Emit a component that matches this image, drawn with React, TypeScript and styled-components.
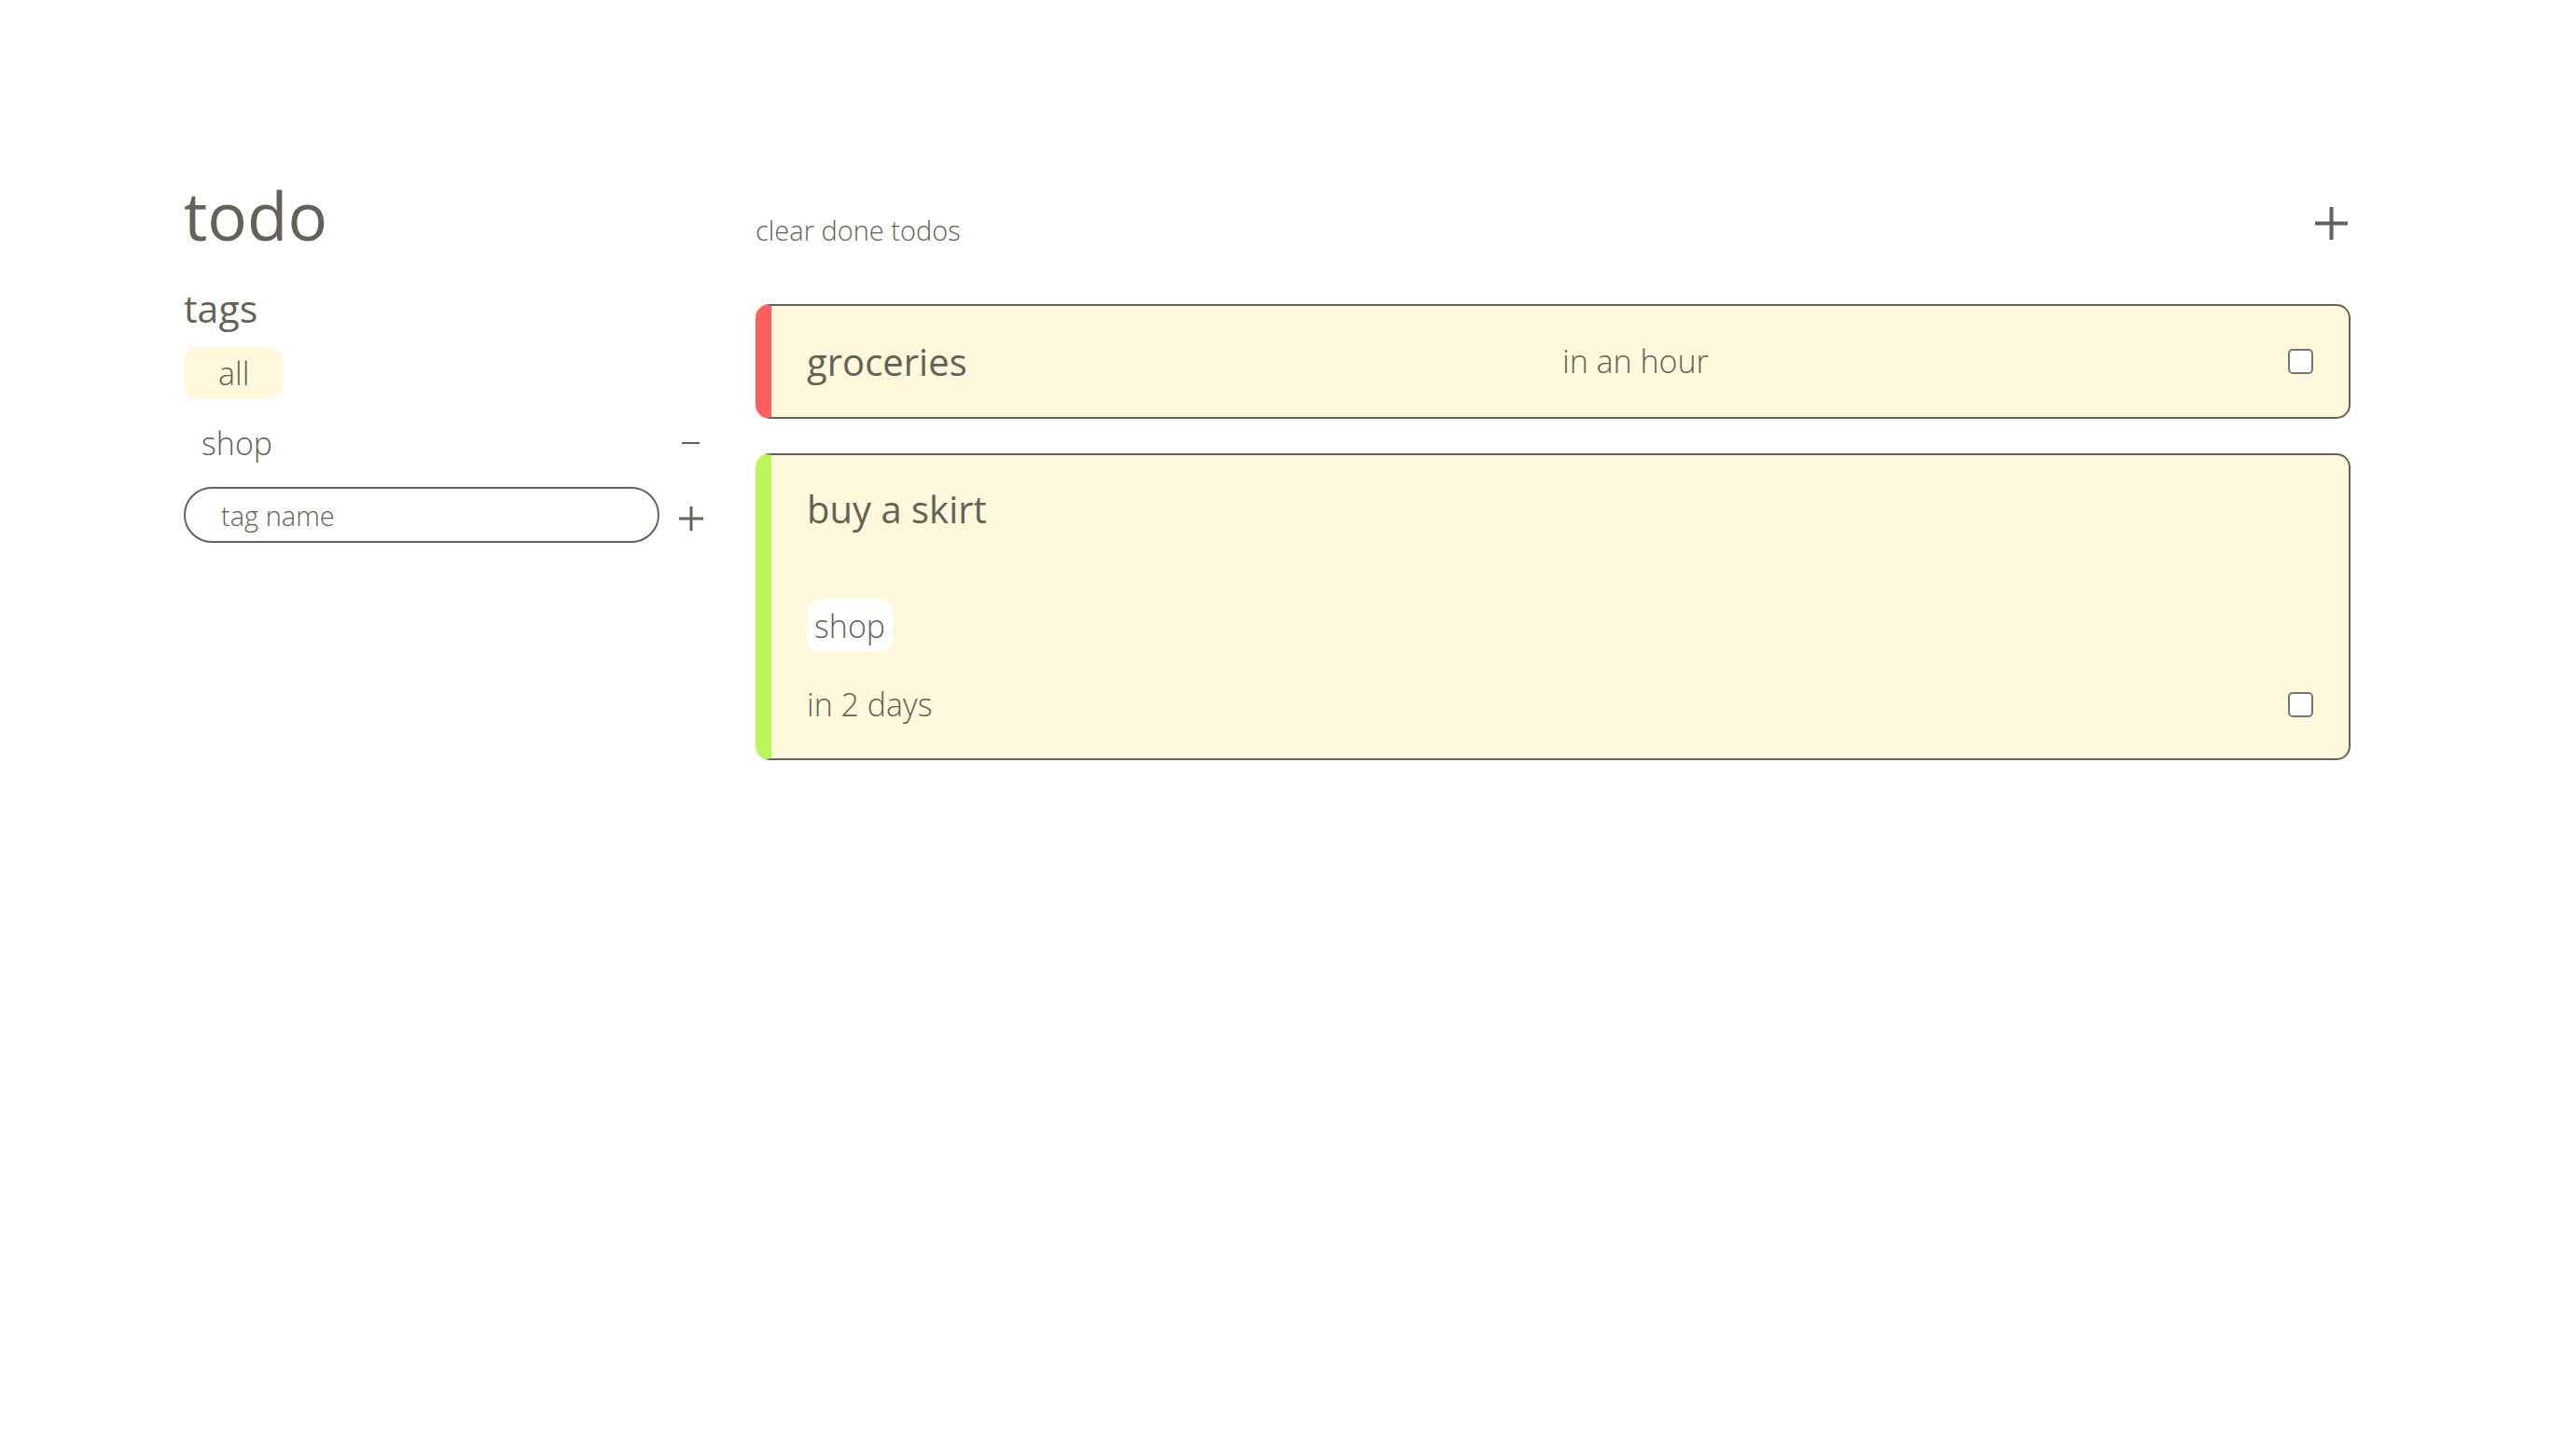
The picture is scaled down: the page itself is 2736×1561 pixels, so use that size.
import styled, { createGlobalStyle } from "styled-components";

const GlobalStyle = createGlobalStyle`
  body {
    margin: 0;
    background: #ffffff;
    color: #646256;
    font-family: "Open Sans", "Noto Sans", sans-serif;
  }
`;

const INK = "#646256";
const CREAM = "#fff8dc";

type Todo = {
  id: number;
  title: string;
  due: string;
  color: string;
  tags: string[];
};

const todos: Todo[] = [
  { id: 1, title: "groceries", due: "in an hour", color: "#ff5f5f", tags: [] },
  { id: 2, title: "buy a skirt", due: "in 2 days", color: "#bbf65c", tags: ["shop"] },
];

const Page = styled.div`
  display: grid;
  grid-template-columns: 558px 1fr;
  column-gap: 55px;
  padding: 195px 216px 0 197px;
`;

const Sidebar = styled.aside`
  display: flex;
  flex-direction: column;
`;

const Title = styled.h1`
  margin: 0;
  font-size: 71px;
  font-weight: 400;
  line-height: 71px;
`;

const TagsHeading = styled.h2`
  margin: 40px 0 0;
  font-size: 41px;
  font-weight: 500;
  line-height: 48px;
`;

const TagList = styled.div`
  display: flex;
  flex-direction: column;
  gap: 21px;
  margin-top: 18px;
`;

const TagPill = styled.button<{ $active?: boolean }>`
  align-self: flex-start;
  height: 56px;
  padding: 0 37px;
  border: none;
  border-radius: 15px;
  background: ${(p) => (p.$active ? CREAM : "transparent")};
  color: ${INK};
  font-family: inherit;
  font-size: 34px;
  font-weight: 300;
`;

const TagRow = styled.div`
  display: flex;
  align-items: center;
  justify-content: space-between;
  height: 52px;
  padding: 0 5px 0 19px;
  font-size: 34px;
  font-weight: 300;
`;

const IconButton = styled.button`
  display: flex;
  align-items: center;
  justify-content: center;
  padding: 0;
  border: none;
  background: none;
  color: ${INK};
`;

const NewTagRow = styled.div`
  display: flex;
  align-items: center;
  gap: 21px;
`;

const AddTag = styled(IconButton)`
  margin-top: 7px;
`;

const TagInput = styled.input`
  box-sizing: border-box;
  width: 510px;
  height: 60px;
  padding: 0 0 0 38px;
  border: 2px solid ${INK};
  border-radius: 30px;
  background: #fff;
  font-family: inherit;
  font-size: 29px;
  font-weight: 300;
  color: ${INK};
  outline: none;

  &::placeholder {
    color: ${INK};
    opacity: 1;
  }
`;

const Main = styled.main`
  display: flex;
  flex-direction: column;
  padding-top: 4px;
`;

const Toolbar = styled.div`
  display: flex;
  align-items: flex-end;
  justify-content: space-between;
  height: 66px;
  margin-bottom: 61px;
`;

const ClearButton = styled.button`
  padding: 0;
  border: none;
  background: none;
  color: ${INK};
  font-family: inherit;
  font-size: 29px;
  font-weight: 300;
  line-height: 37px;
`;

const AddTodo = styled(IconButton)`
  margin: 0 3px 8px 0;
`;

const TodoList = styled.div`
  display: flex;
  flex-direction: column;
  gap: 37px;
`;

const Card = styled.div<{ $color: string }>`
  box-sizing: border-box;
  padding: 36px 38px;
  border: 2px solid ${INK};
  border-left: 17px solid ${(p) => p.$color};
  border-radius: 15px;
  background: ${CREAM};
`;

const TaggedCard = styled(Card)`
  padding: 34px 38px 37px;
`;

const CardRow = styled.div`
  display: grid;
  grid-template-columns: 810px 1fr auto;
  align-items: center;
`;

const TodoTitle = styled.div`
  font-size: 40px;
  font-weight: 400;
  line-height: 47px;
`;

const Due = styled.div`
  font-size: 34px;
  font-weight: 300;
  line-height: 41px;
`;

const DueRow = styled.div`
  display: flex;
  align-items: center;
  justify-content: space-between;
  margin-top: 36px;
`;

const Chips = styled.div`
  display: flex;
  gap: 12px;
  margin-top: 73px;
`;

const Chip = styled.span`
  display: flex;
  align-items: center;
  height: 57px;
  padding: 0 8px;
  border-radius: 15px;
  background: #ffffff;
  font-size: 34px;
  font-weight: 300;
`;

const Check = styled.input.attrs({ type: "checkbox" })`
  appearance: none;
  box-sizing: border-box;
  width: 27px;
  height: 27px;
  margin: 0;
  border: 2px solid #767676;
  border-radius: 5px;
  background: #ffffff;
`;

function Plus({ size, stroke }: { size: number; stroke: number }) {
  return (
    <svg width={size} height={size} viewBox={`0 0 ${size} ${size}`}>
      <line x1={size / 2} y1={0} x2={size / 2} y2={size} stroke={INK} strokeWidth={stroke} />
      <line x1={0} y1={size / 2} x2={size} y2={size / 2} stroke={INK} strokeWidth={stroke} />
    </svg>
  );
}

function Minus() {
  return (
    <svg width={19} height={4} viewBox="0 0 19 4">
      <line x1={0} y1={2} x2={19} y2={2} stroke={INK} strokeWidth={2} />
    </svg>
  );
}

function TodoCard({ todo }: { todo: Todo }) {
  if (todo.tags.length === 0) {
    return (
      <Card $color={todo.color}>
        <CardRow>
          <TodoTitle>{todo.title}</TodoTitle>
          <Due>{todo.due}</Due>
          <Check />
        </CardRow>
      </Card>
    );
  }

  return (
    <TaggedCard $color={todo.color}>
      <TodoTitle>{todo.title}</TodoTitle>
      <Chips>
        {todo.tags.map((tag) => (
          <Chip key={tag}>{tag}</Chip>
        ))}
      </Chips>
      <DueRow>
        <Due>{todo.due}</Due>
        <Check />
      </DueRow>
    </TaggedCard>
  );
}

export default function App() {
  return (
    <>
      <GlobalStyle />
      <Page>
        <Sidebar>
          <Title>todo</Title>
          <TagsHeading>tags</TagsHeading>
          <TagList>
            <TagPill $active>all</TagPill>
            <TagRow>
              <span>shop</span>
              <IconButton>
                <Minus />
              </IconButton>
            </TagRow>
            <NewTagRow>
              <TagInput placeholder="tag name" />
              <AddTag>
                <Plus size={26} stroke={3} />
              </AddTag>
            </NewTagRow>
          </TagList>
        </Sidebar>

        <Main>
          <Toolbar>
            <ClearButton>clear done todos</ClearButton>
            <AddTodo>
              <Plus size={35} stroke={4} />
            </AddTodo>
          </Toolbar>
          <TodoList>
            {todos.map((todo) => (
              <TodoCard key={todo.id} todo={todo} />
            ))}
          </TodoList>
        </Main>
      </Page>
    </>
  );
}
